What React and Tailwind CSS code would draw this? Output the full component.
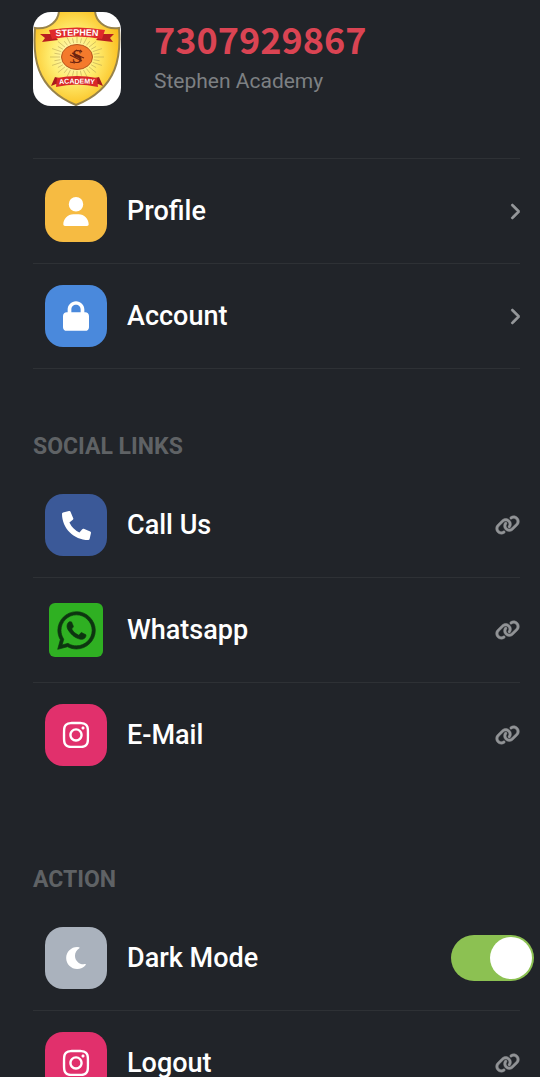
import React, { useState } from 'react';
import { FaUser, FaLock, FaInstagram, FaLink, FaChevronRight, FaWhatsapp } from 'react-icons/fa6';
import { FaMoon, FaPhoneAlt } from 'react-icons/fa';

const accountItems = [
  { label: 'Profile', icon: FaUser, color: 'bg-[#f6bb42]', size: 'h-[29px] w-[26px]' },
  { label: 'Account', icon: FaLock, color: 'bg-[#4a89dc]', size: 'h-[30px] w-[26px]' },
];

const socialItems = [
  { label: 'Call Us', icon: FaPhoneAlt, color: 'bg-[#3b5998]', size: 'h-[29px] w-[29px]' },
  { label: 'Whatsapp', whatsapp: true },
  { label: 'E-Mail', icon: FaInstagram, color: 'bg-[#e1306c]', size: 'h-[30px] w-[30px]' },
];

const RAYS = Array.from({ length: 32 }, (_, i) => (i * Math.PI) / 16);

const Logo = () => (
  <svg viewBox="0 0 88 94" className="h-[94px] w-[88px] shrink-0 rounded-[18px] bg-white" role="img" aria-label="Stephen Academy logo">
    <defs>
      <radialGradient id="shield" cx="46%" cy="48%" r="58%">
        <stop offset="0" stopColor="#fffbd0" />
        <stop offset="0.45" stopColor="#ffee72" />
        <stop offset="1" stopColor="#fabb18" />
      </radialGradient>
      <path id="arcTop" d="M10 25.5 Q44 21.5 78 25.5" />
      <path id="arcBottom" d="M18 73 Q44 70 70 73" />
    </defs>
    <path
      d="M26 -2 C26 8 17 18 2 16 C0 42 1 76 43 93 C86 76 88 42 86 16 C71 18 62 8 62 -2 Z"
      fill="url(#shield)"
      stroke="#98834a"
      strokeWidth="2"
    />
    {RAYS.map((a, i) => (
      <line
        key={i}
        x1={44 + Math.cos(a) * 17}
        y1={45 + Math.sin(a) * 14}
        x2={44 + Math.cos(a) * (i % 2 ? 23 : 27)}
        y2={45 + Math.sin(a) * (i % 2 ? 19 : 22)}
        stroke="#b9a552"
        strokeWidth="0.6"
      />
    ))}
    <ellipse cx="44" cy="45" rx="15.5" ry="12.5" fill="#f47a2c" stroke="#b5551d" strokeWidth="1" />
    <text x="44" y="51" textAnchor="middle" fontSize="18" fontWeight="700" fontFamily="Liberation Serif, serif" fill="#6d2410">
      S
    </text>
    <path d="M37 43 L49 49 M39 41 L51 46 M37 50 L42 51 M43 38 L45 39 M47 38 L49 40" stroke="#6d2410" strokeWidth="1.2" />
    {/* Cintas */}
    <path d="M20 22 L7 22 L12 26 L9 30 L25 28 Z M68 22 L81 22 L77 26 L80 30 L63 28 Z" fill="#b91e20" />
    <path d="M16 18 Q44 13 72 18 L69 27 Q44 22 19 27 Z" fill="#e02b2b" />
    <text fontSize="9" fontWeight="700" fontFamily="Liberation Sans, sans-serif" fill="#fff">
      <textPath href="#arcTop" startOffset="50%" textAnchor="middle">STEPHEN</textPath>
    </text>
    <path d="M26 66 L22 65 L18 74 L23 72 L28 74 Z M62 66 L66 65 L70 74 L65 72 L60 74 Z" fill="#a81a1c" />
    <path d="M24 66 Q44 62 64 66 L65 75 Q44 70 23 75 Z" fill="#d92828" />
    <text fontSize="7" fontWeight="700" fontFamily="Liberation Sans, sans-serif" fill="#fff">
      <textPath href="#arcBottom" startOffset="50%" textAnchor="middle">ACADEMY</textPath>
    </text>
  </svg>
);

const ItemIcon = ({ item }) => {
  if (item.whatsapp) {
    return (
      <span className="mx-1 flex h-[54px] w-[54px] shrink-0 items-center justify-center rounded-md bg-[#2fb022] text-[#0d3510]">
        <FaWhatsapp className="h-[43px] w-[43px] stroke-current stroke-[8px]" />
      </span>
    );
  }
  const Icon = item.icon;
  return (
    <span className={`flex h-[62px] w-[62px] shrink-0 items-center justify-center rounded-[18px] text-white ${item.color}`}>
      <Icon className={item.size} />
    </span>
  );
};

const rowClass = 'box-content flex h-[104px] items-center pl-3 text-[27px] font-medium text-white';

const LinkRow = ({ item, chevron }) => (
  <a href="#" className={rowClass}>
    <ItemIcon item={item} />
    <span className="ml-5 flex-1">{item.label}</span>
    {chevron ? (
      <FaChevronRight className="h-[17px] w-[11px] stroke-current stroke-[24px] text-[#96989b]" />
    ) : (
      <FaLink className="h-5 w-[25px] stroke-current stroke-[12px] text-[#919396]" />
    )}
  </a>
);

const SectionTitle = ({ children }) => (
  <h2 className="text-[23px] leading-7 font-bold text-[#5f6265]">{children}</h2>
);

const App = () => {
  const [darkMode, setDarkMode] = useState(true);

  return (
    <div className="h-screen overflow-y-auto bg-[#212429] pr-5 pl-[33px] font-['Roboto',sans-serif] [scrollbar-width:none]">
      <header className="flex h-[158px] items-start gap-[33px] pt-3">
        <Logo />
        <div className="pt-1">
          <h1 className="font-['Noto_Sans_CJK_SC',sans-serif] text-[36px] leading-[44px] font-bold text-[#da4453]">
            7307929867
          </h1>
          <p className="pt-1 text-[21px] leading-[34px] text-[#7d8083]">Stephen Academy</p>
        </div>
      </header>

      <nav className="divide-y divide-[#2e3135] border-y border-[#2e3135]">
        {accountItems.map((item) => (
          <LinkRow key={item.label} item={item} chevron />
        ))}
      </nav>

      <section className="pt-16">
        <SectionTitle>SOCIAL LINKS</SectionTitle>
        <div className="mt-3 divide-y divide-[#2e3135]">
          {socialItems.map((item) => (
            <LinkRow key={item.label} item={item} />
          ))}
        </div>
      </section>

      <section className="pt-[79px]">
        <SectionTitle>ACTION</SectionTitle>
        <div className="mt-3 divide-y divide-[#2e3135]">
          <label className={`${rowClass} cursor-pointer`}>
            <ItemIcon item={{ icon: FaMoon, color: 'bg-[#aab2bd]', size: 'h-[22px] w-[22px]' }} />
            <span className="ml-5 flex-1">Dark Mode</span>
            <input
              type="checkbox"
              role="switch"
              checked={darkMode}
              onChange={(e) => setDarkMode(e.target.checked)}
              className="-mr-3.5 flex h-[46px] w-[83px] shrink-0 cursor-pointer appearance-none rounded-full bg-[#4b4f54] p-0.5 before:h-[42px] before:w-[42px] before:rounded-full before:bg-white checked:justify-end checked:bg-[#8cc152]"
            />
          </label>
          <LinkRow item={{ label: 'Logout', icon: FaInstagram, color: 'bg-[#e1306c]', size: 'h-[30px] w-[30px]' }} />
        </div>
      </section>
    </div>
  );
};

export default App;
